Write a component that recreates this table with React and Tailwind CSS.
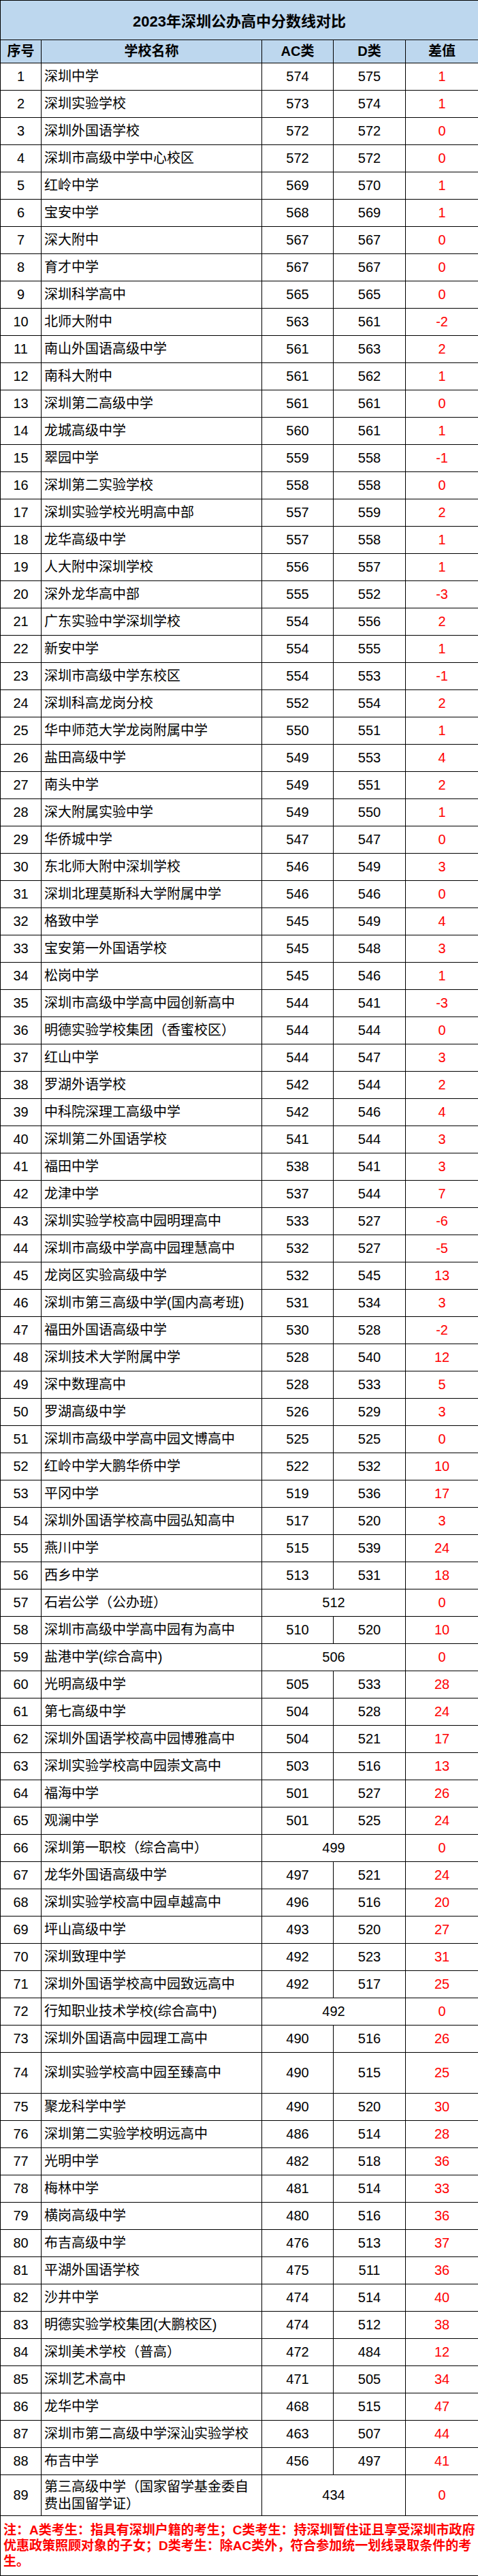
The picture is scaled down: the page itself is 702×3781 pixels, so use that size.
const rows = [
  ["深圳中学", 574, 575, 1],
  ["深圳实验学校", 573, 574, 1],
  ["深圳外国语学校", 572, 572, 0],
  ["深圳市高级中学中心校区", 572, 572, 0],
  ["红岭中学", 569, 570, 1],
  ["宝安中学", 568, 569, 1],
  ["深大附中", 567, 567, 0],
  ["育才中学", 567, 567, 0],
  ["深圳科学高中", 565, 565, 0],
  ["北师大附中", 563, 561, -2],
  ["南山外国语高级中学", 561, 563, 2],
  ["南科大附中", 561, 562, 1],
  ["深圳第二高级中学", 561, 561, 0],
  ["龙城高级中学", 560, 561, 1],
  ["翠园中学", 559, 558, -1],
  ["深圳第二实验学校", 558, 558, 0],
  ["深圳实验学校光明高中部", 557, 559, 2],
  ["龙华高级中学", 557, 558, 1],
  ["人大附中深圳学校", 556, 557, 1],
  ["深外龙华高中部", 555, 552, -3],
  ["广东实验中学深圳学校", 554, 556, 2],
  ["新安中学", 554, 555, 1],
  ["深圳市高级中学东校区", 554, 553, -1],
  ["深圳科高龙岗分校", 552, 554, 2],
  ["华中师范大学龙岗附属中学", 550, 551, 1],
  ["盐田高级中学", 549, 553, 4],
  ["南头中学", 549, 551, 2],
  ["深大附属实验中学", 549, 550, 1],
  ["华侨城中学", 547, 547, 0],
  ["东北师大附中深圳学校", 546, 549, 3],
  ["深圳北理莫斯科大学附属中学", 546, 546, 0],
  ["格致中学", 545, 549, 4],
  ["宝安第一外国语学校", 545, 548, 3],
  ["松岗中学", 545, 546, 1],
  ["深圳市高级中学高中园创新高中", 544, 541, -3],
  ["明德实验学校集团（香蜜校区）", 544, 544, 0],
  ["红山中学", 544, 547, 3],
  ["罗湖外语学校", 542, 544, 2],
  ["中科院深理工高级中学", 542, 546, 4],
  ["深圳第二外国语学校", 541, 544, 3],
  ["福田中学", 538, 541, 3],
  ["龙津中学", 537, 544, 7],
  ["深圳实验学校高中园明理高中", 533, 527, -6],
  ["深圳市高级中学高中园理慧高中", 532, 527, -5],
  ["龙岗区实验高级中学", 532, 545, 13],
  ["深圳市第三高级中学(国内高考班)", 531, 534, 3],
  ["福田外国语高级中学", 530, 528, -2],
  ["深圳技术大学附属中学", 528, 540, 12],
  ["深中数理高中", 528, 533, 5],
  ["罗湖高级中学", 526, 529, 3],
  ["深圳市高级中学高中园文博高中", 525, 525, 0],
  ["红岭中学大鹏华侨中学", 522, 532, 10],
  ["平冈中学", 519, 536, 17],
  ["深圳外国语学校高中园弘知高中", 517, 520, 3],
  ["燕川中学", 515, 539, 24],
  ["西乡中学", 513, 531, 18],
  ["石岩公学（公办班）", 512, null, 0],
  ["深圳市高级中学高中园有为高中", 510, 520, 10],
  ["盐港中学(综合高中)", 506, null, 0],
  ["光明高级中学", 505, 533, 28],
  ["第七高级中学", 504, 528, 24],
  ["深圳外国语学校高中园博雅高中", 504, 521, 17],
  ["深圳实验学校高中园崇文高中", 503, 516, 13],
  ["福海中学", 501, 527, 26],
  ["观澜中学", 501, 525, 24],
  ["深圳第一职校（综合高中）", 499, null, 0],
  ["龙华外国语高级中学", 497, 521, 24],
  ["深圳实验学校高中园卓越高中", 496, 516, 20],
  ["坪山高级中学", 493, 520, 27],
  ["深圳致理中学", 492, 523, 31],
  ["深圳外国语学校高中园致远高中", 492, 517, 25],
  ["行知职业技术学校(综合高中)", 492, null, 0],
  ["深圳外国语高中园理工高中", 490, 516, 26],
  ["深圳实验学校高中园至臻高中", 490, 515, 25],
  ["聚龙科学中学", 490, 520, 30],
  ["深圳第二实验学校明远高中", 486, 514, 28],
  ["光明中学", 482, 518, 36],
  ["梅林中学", 481, 514, 33],
  ["横岗高级中学", 480, 516, 36],
  ["布吉高级中学", 476, 513, 37],
  ["平湖外国语学校", 475, 511, 36],
  ["沙井中学", 474, 514, 40],
  ["明德实验学校集团(大鹏校区)", 474, 512, 38],
  ["深圳美术学校（普高）", 472, 484, 12],
  ["深圳艺术高中", 471, 505, 34],
  ["龙华中学", 468, 515, 47],
  ["深圳市第二高级中学深汕实验学校", 463, 507, 44],
  ["布吉中学", 456, 497, 41],
  ["第三高级中学（国家留学基金委自费出国留学证）", 434, null, 0],
];

// rows that are taller in the sheet
const tall = [74, 89];

const cell = "border border-black text-center align-middle";

export default function App() {
  return (
    <div className="w-[702px] bg-white font-['Liberation_Sans','Noto_Sans_CJK_SC',sans-serif] text-[20px] leading-[25px] text-black">
      <table className="w-[702px] table-fixed border-collapse">
        <colgroup>
          <col className="w-[60px]" />
          <col className="w-[324px]" />
          <col className="w-[105px]" />
          <col className="w-[106px]" />
          <col className="w-[107px]" />
        </colgroup>
        <thead>
          <tr className="h-[58px] bg-[#bdd7ee]">
            <th colSpan={5} className={`${cell} pt-1 text-[22px] font-bold`}>
              2023年深圳公办高中分数线对比
            </th>
          </tr>
          <tr className="h-[34px] bg-[#bdd7ee] font-bold">
            <th className={cell}>序号</th>
            <th className={cell}>学校名称</th>
            <th className={cell}>AC类</th>
            <th className={cell}>D类</th>
            <th className={cell}>差值</th>
          </tr>
        </thead>
        <tbody>
          {rows.map(([name, ac, d, diff], i) => {
            const n = i + 1;
            return (
              <tr key={n} className={tall.includes(n) ? "h-[60px]" : "h-[40px]"}>
                <td className={cell}>{n}</td>
                <td className="border border-black px-1 text-left align-middle">{name}</td>
                {d == null ? (
                  <td colSpan={2} className={cell}>{ac}</td>
                ) : (
                  <>
                    <td className={cell}>{ac}</td>
                    <td className={cell}>{d}</td>
                  </>
                )}
                <td className={`${cell} text-[#ff0000]`}>{diff}</td>
              </tr>
            );
          })}
          <tr className="h-[88px]">
            <td colSpan={5} className="border border-black px-1 text-left align-middle text-[19px] font-bold leading-[23px] text-[#ff0000] whitespace-nowrap">
              注：A类考生：指具有深圳户籍的考生；C类考生：持深圳暂住证且享受深圳市政府
              <br />
              优惠政策照顾对象的子女；D类考生：除AC类外，符合参加统一划线录取条件的考
              <br />
              生。
            </td>
          </tr>
        </tbody>
      </table>
    </div>
  );
}
